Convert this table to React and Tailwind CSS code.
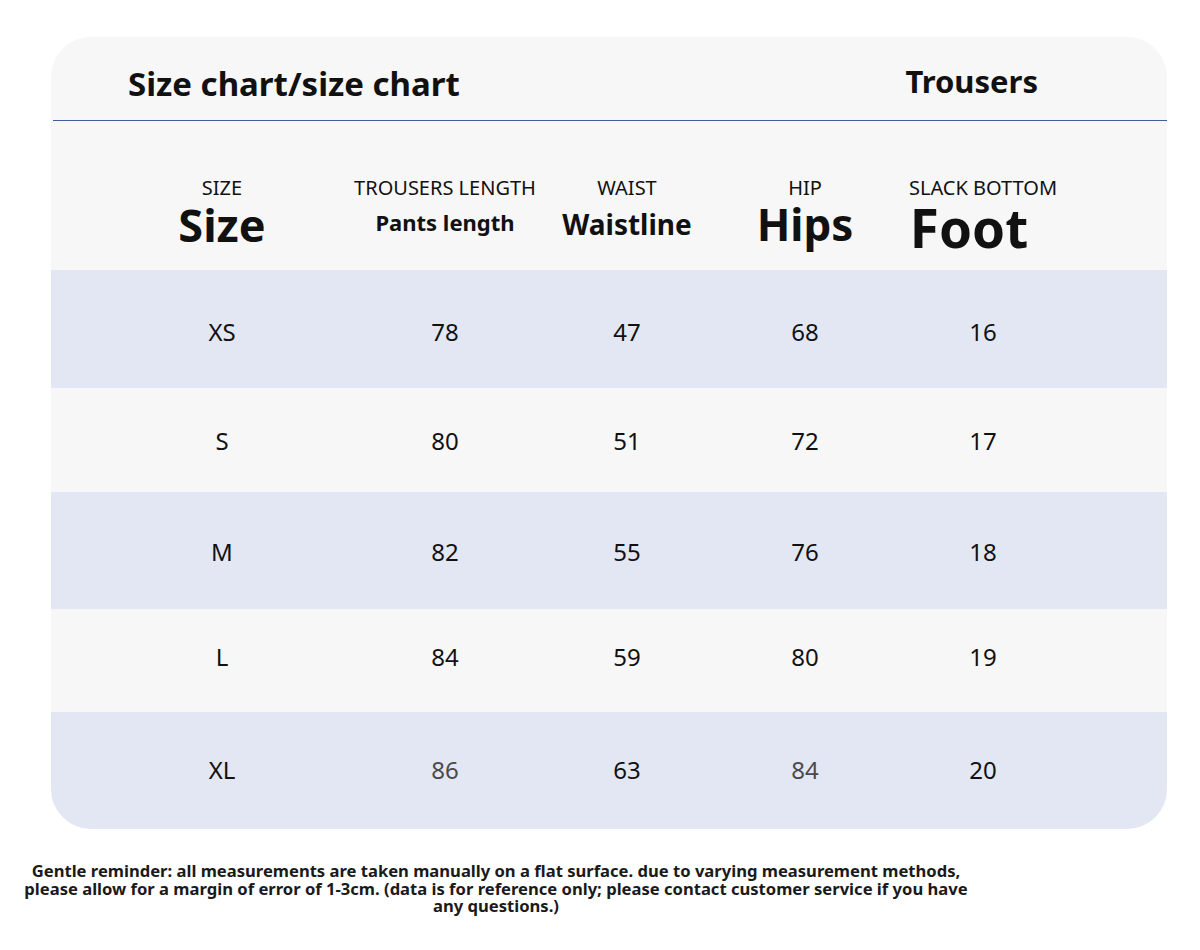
import React from 'react'

const COLS = [
  { label: 'SIZE', big: 'Size', bigCls: 'text-[45px] mt-[4px]' },
  { label: 'TROUSERS LENGTH', big: 'Pants length', bigCls: 'text-[22px] mt-[13px]' },
  { label: 'WAIST', big: 'Waistline', bigCls: 'text-[28px] mt-[12px]' },
  { label: 'HIP', big: 'Hips', bigCls: 'text-[44px] mt-[4px]' },
  { label: 'SLACK BOTTOM', big: 'Foot', bigCls: 'text-[53px] mt-[3px] -ml-[28px]' },
]

const ROWS = [
  { size: 'XS', vals: ['78', '47', '68', '16'], bg: 'bg-[#e3e7f3]', h: 'h-[118px]', pad: 'pt-[6px]' },
  { size: 'S', vals: ['80', '51', '72', '17'], bg: 'bg-[#f7f7f7]', h: 'h-[104px]', pad: 'pt-[2px]' },
  { size: 'M', vals: ['82', '55', '76', '18'], bg: 'bg-[#e3e7f3]', h: 'h-[117px]', pad: 'pt-[2px]' },
  { size: 'L', vals: ['84', '59', '80', '19'], bg: 'bg-[#f7f7f7]', h: 'h-[103px]', pad: 'pb-[8px]' },
  { size: 'XL', vals: ['86', '63', '84', '20'], bg: 'bg-[#e3e7f3]', h: 'h-[117px]', pad: 'pb-[2px]', grey: [0, 2] },
]

const grid = 'grid grid-cols-[222px_224px_140px_216px_140px] pl-[60px]'

export default function App() {
  return (
    <div
      className="w-[1200px] h-[950px] bg-white text-[#111]"
      style={{ fontFamily: '"Noto Sans", "Open Sans", sans-serif' }}
    >
      <div className="pt-[37px] pl-[51px]">
        <div className="w-[1116px] rounded-[40px] overflow-hidden bg-[#f7f7f7]">
          {/* title bar */}
          <div className="h-[83px] flex items-center justify-between pl-[77px] pr-[129px]">
            <span className="text-[33px] font-bold leading-none mt-[10px]">Size chart/size chart</span>
            <span className="text-[31px] font-bold leading-none mt-[6px]">Trousers</span>
          </div>
          <div className="h-px bg-[#3d5f9e] ml-[2px]" />

          {/* column heads */}
          <div className={`${grid} h-[149px] pt-[57px]`}>
            {COLS.map((c) => (
              <div key={c.label} className="flex flex-col items-center whitespace-nowrap">
                <span className="text-[20px] leading-none">{c.label}</span>
                <span className={`font-bold leading-none ${c.bigCls}`}>{c.big}</span>
              </div>
            ))}
          </div>

          {/* data rows */}
          {ROWS.map((r) => (
            <div key={r.size} className={`${grid} ${r.bg} ${r.h} ${r.pad} items-center`}>
              <div className="flex justify-center text-[24px] leading-none">{r.size}</div>
              {r.vals.map((v, i) => (
                <div
                  key={i}
                  className={`flex justify-center text-[24px] leading-none ${
                    r.grey && r.grey.includes(i) ? 'text-[#4a4a4a]' : ''
                  }`}
                >
                  {v}
                </div>
              ))}
            </div>
          ))}
        </div>
      </div>

      {/* footnote */}
      <div className="w-[992px] mt-[33px] text-center text-[16.6px] font-bold leading-[17.5px] text-[#1a1a1a]">
        Gentle reminder: all measurements are taken manually on a flat surface. due to varying measurement methods,
        <br />
        please allow for a margin of error of 1-3cm. (data is for reference only; please contact customer service if you have
        <br />
        any questions.)
      </div>
    </div>
  )
}
